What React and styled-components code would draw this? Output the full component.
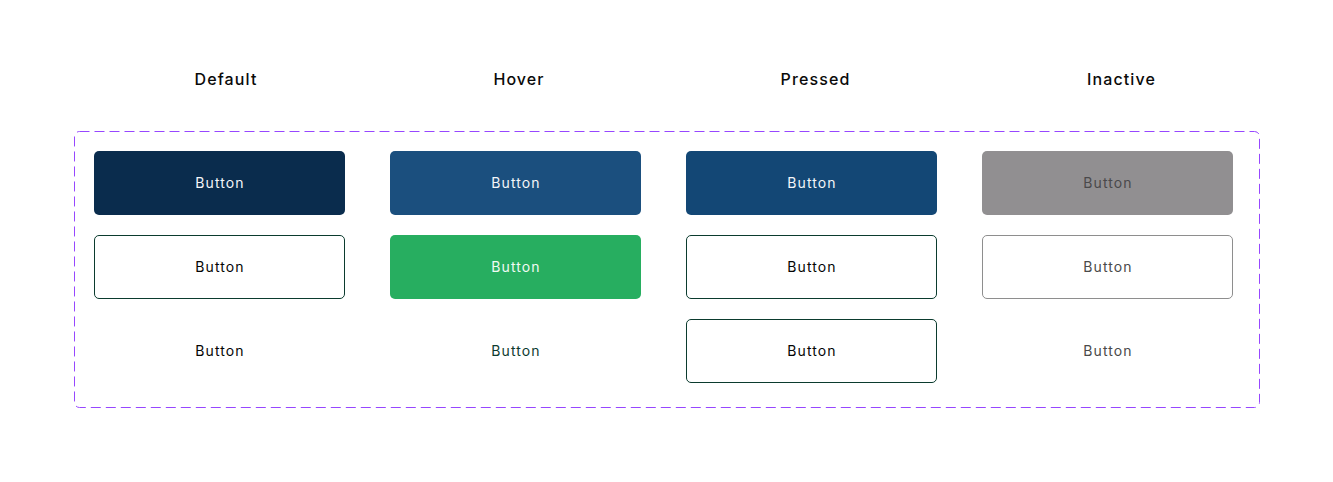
import { createGlobalStyle, styled } from 'styled-components'

const GlobalStyle = createGlobalStyle`
  html, body {
    margin: 0;
    background: #fff;
    font-family: Inter, 'Noto Sans', sans-serif;
  }
`

const Page = styled.div`
  width: 1333px;
  height: 482px;
  padding-top: 69px;
  box-sizing: border-box;
`

const HeaderRow = styled.div`
  display: grid;
  grid-template-columns: repeat(4, 251px);
  column-gap: 45px;
  padding-left: 94px;
  margin-bottom: 42px;
`

const Heading = styled.div`
  display: flex;
  justify-content: center;
  padding-left: ${props => props.$shift * 2}px;
  font-size: 16px;
  line-height: 20px;
  font-weight: 500;
  letter-spacing: 1.1px;
  color: #0a0a0a;
`

const Frame = styled.div`
  position: relative;
  margin-left: 74px;
  width: 1186px;
  height: 277px;
  box-sizing: border-box;
  padding: 20px 27px 25px 20px;
`

const DashedOutline = styled.svg`
  position: absolute;
  left: 0;
  top: 0;
  width: 1186px;
  height: 277px;
  pointer-events: none;
`

const Grid = styled.div`
  display: grid;
  grid-template-columns: repeat(4, 251px);
  grid-template-rows: repeat(3, 64px);
  grid-auto-flow: column;
  column-gap: 45px;
  row-gap: 20px;
`

const variants = {
  primary: { bg: '#0a2c4d', color: '#f4f6f9', border: 'transparent' },
  primaryHover: { bg: '#1b4f7e', color: '#f4f6f9', border: 'transparent' },
  primaryPressed: { bg: '#134775', color: '#f4f6f9', border: 'transparent' },
  primaryInactive: { bg: '#918f91', color: '#4a494b', border: 'transparent' },
  success: { bg: '#27ae60', color: '#f0faf3', border: 'transparent' },
  outline: { bg: '#fff', color: '#050505', border: '#0b3b2e' },
  outlineInactive: { bg: '#fff', color: '#4a4a4a', border: '#8e8e8e' },
  ghost: { bg: 'transparent', color: '#050505', border: 'transparent' },
  ghostHover: { bg: 'transparent', color: '#0d3b2f', border: 'transparent' },
  ghostInactive: { bg: 'transparent', color: '#4a4a4a', border: 'transparent' },
}

const Button = styled.button`
  display: flex;
  align-items: center;
  justify-content: center;
  width: 251px;
  height: 64px;
  box-sizing: border-box;
  border-radius: 5px;
  border: 1px solid ${props => variants[props.$variant].border};
  background: ${props => variants[props.$variant].bg};
  color: ${props => variants[props.$variant].color};
  font-family: Inter, 'Noto Sans', sans-serif;
  font-size: 14px;
  line-height: 18px;
  font-weight: 400;
  letter-spacing: 1.1px;
  padding: 0 0 0 1px;
  cursor: ${props => props.disabled ? 'not-allowed' : 'pointer'};
`

const columns = [
  { title: 'Default', shift: 6.5, items: ['primary', 'outline', 'ghost'] },
  { title: 'Hover', shift: 3.5, items: ['primaryHover', 'success', 'ghostHover'] },
  { title: 'Pressed', shift: 4, items: ['primaryPressed', 'outline', 'outline'] },
  { title: 'Inactive', shift: 14, items: ['primaryInactive', 'outlineInactive', 'ghostInactive'], disabled: true },
]

export default function App() {
  return (
    <Page>
      <GlobalStyle />
      <HeaderRow>
        {columns.map(col => (
          <Heading key={col.title} $shift={col.shift}>{col.title}</Heading>
        ))}
      </HeaderRow>
      <Frame>
        <DashedOutline viewBox="0 0 1186 277">
          <rect
            x="0.5"
            y="0.5"
            width="1185"
            height="276"
            rx="5"
            fill="none"
            stroke="#9747ff"
            strokeWidth="1"
            strokeDasharray="10 5"
          />
        </DashedOutline>
        <Grid>
          {columns.flatMap(col =>
            col.items.map((v, i) => (
              <Button key={col.title + i} $variant={v} disabled={col.disabled}>Button</Button>
            ))
          )}
        </Grid>
      </Frame>
    </Page>
  )
}
